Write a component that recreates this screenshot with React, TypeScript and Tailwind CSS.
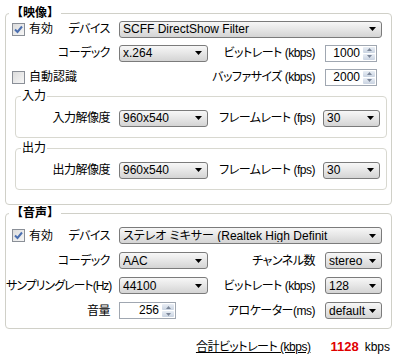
import type { ReactNode } from 'react'

const FONT = "font-['Liberation_Sans','Noto_Sans_CJK_JP',sans-serif] [font-feature-settings:'palt']"

function Check({ checked }: { checked?: boolean }) {
  return (
    <div className="w-[13px] h-[13px] border border-[#8a8f97] bg-gradient-to-br from-[#dcdcdc] to-[#f6f6f6] flex items-center justify-center">
      {checked && (
        <svg width="9" height="9" viewBox="0 0 9 9">
          <path d="M1 4.5 L3.5 7 L8 1.5" fill="none" stroke="#4b6fb0" strokeWidth="2" />
        </svg>
      )}
    </div>
  )
}

function Combo({ value, w }: { value: string; w: string }) {
  return (
    <div className={`${w} h-[17px] rounded-[3px] border border-[#7b7b7b] bg-gradient-to-b from-[#f7f7f7] via-[#e6e6e6] to-[#d4d4d4] flex items-center pl-[3px] pr-[5px]`}>
      <span className="flex-1 overflow-hidden whitespace-nowrap text-[12px] leading-none">{value}</span>
      <svg width="7" height="4" viewBox="0 0 7 4" className="shrink-0 ml-[2px]">
        <path d="M0 0 H7 L3.5 4 Z" fill="#000" />
      </svg>
    </div>
  )
}

function Spin({ value, w }: { value: string; w: string }) {
  return (
    <div className={`${w} h-[17px] border border-[#a0a7b1] bg-white flex items-stretch`}>
      <span className="flex-1 text-right text-[12px] leading-[15px] pr-[2px]">{value}</span>
      <div className="w-[14px] flex flex-col gap-px p-px">
        <div className="flex-1 rounded-[1px] bg-gradient-to-b from-[#e9eef5] to-[#c9d3e1] flex items-center justify-center">
          <svg width="5" height="3" viewBox="0 0 5 3"><path d="M0 3 H5 L2.5 0 Z" fill="#7a8598" /></svg>
        </div>
        <div className="flex-1 rounded-[1px] bg-gradient-to-b from-[#e9eef5] to-[#c9d3e1] flex items-center justify-center">
          <svg width="5" height="3" viewBox="0 0 5 3"><path d="M0 0 H5 L2.5 3 Z" fill="#7a8598" /></svg>
        </div>
      </div>
    </div>
  )
}

function Label({ children, w, lead, tight }: { children?: ReactNode; w: string; lead?: ReactNode; tight?: boolean }) {
  return (
    <div className={`${w} shrink-0 flex items-center justify-between pr-px`}>
      <div className="flex items-center">{lead}</div>
      <span className={`whitespace-nowrap ${tight ? 'tracking-[-1px]' : 'tracking-[-0.5px]'}`}>{children}</span>
    </div>
  )
}

function Enable({ text, checked }: { text: string; checked?: boolean }) {
  return (
    <div className="flex items-center gap-[4px] pl-[6px]">
      <Check checked={checked} />
      <span>{text}</span>
    </div>
  )
}

function Group({ title, children, className }: { title: string; children: ReactNode; className?: string }) {
  return (
    <fieldset className={`border border-[#d0d0c8] rounded-[4px] ${className ?? ''}`}>
      <legend className="ml-[3px] px-[2px] leading-[8px] font-bold text-[12px] [font-feature-settings:normal]">{title}</legend>
      {children}
    </fieldset>
  )
}

function SubGroup({ title, label, res, className }: { title: string; label: string; res: string; className?: string }) {
  return (
    <fieldset className={`ml-[9px] mr-[4px] border border-[#d8d8d0] rounded-[4px] pt-[6px] pb-[7px] ${className ?? ''}`}>
      <legend className="ml-[5px] px-px leading-[8px] text-[12px]">{title}</legend>
      <div className="flex items-center h-[24px]">
        <Label w="w-[95px]">{label}</Label>
        <div className="ml-[8px]"><Combo value={res} w="w-[89px]" /></div>
        <Label w="w-[108px]">フレームレート (fps)</Label>
        <div className="ml-[7px]"><Combo value="30" w="w-[57px]" /></div>
      </div>
    </fieldset>
  )
}

export default function App() {
  return (
    <div className={`w-[397px] h-[357px] bg-white text-black text-[12px] ${FONT}`}>
      <div className="pt-[9px] px-[5px]">
        <Group title="【映像】" className="pb-[14px]">
          <div className="flex items-center h-[24px]">
            <Label w="w-[105px]" lead={<Enable text="有効" checked />}>デバイス</Label>
            <div className="ml-[8px]"><Combo value="SCFF DirectShow Filter" w="w-[263px]" /></div>
          </div>
          <div className="flex items-center h-[24px]">
            <Label w="w-[105px]">コーデック</Label>
            <div className="ml-[8px]"><Combo value="x.264" w="w-[89px]" /></div>
            <Label w="w-[108px]">ビットレート (kbps)</Label>
            <div className="ml-[9px]"><Spin value="1000" w="w-[52px]" /></div>
          </div>
          <div className="flex items-center h-[24px]">
            <Label w="w-[105px]" lead={<Enable text="自動認識" />} />
            <div className="w-[97px]" />
            <Label w="w-[108px]">バッファサイズ (kbps)</Label>
            <div className="ml-[9px]"><Spin value="2000" w="w-[52px]" /></div>
          </div>
          <SubGroup title="入力" label="入力解像度" res="960x540" className="mt-[3px]" />
          <SubGroup title="出力" label="出力解像度" res="960x540" className="mt-[6px]" />
        </Group>

        <Group title="【音声】" className="mt-[4px] pt-[6px] pb-[5px]">
          <div className="flex items-center h-[25px]">
            <Label w="w-[105px]" lead={<Enable text="有効" checked />}>デバイス</Label>
            <div className="ml-[8px]"><Combo value="ステレオ ミキサー (Realtek High Definit" w="w-[263px]" /></div>
          </div>
          <div className="flex items-center h-[25px]">
            <Label w="w-[105px]">コーデック</Label>
            <div className="ml-[8px]"><Combo value="AAC" w="w-[89px]" /></div>
            <Label w="w-[108px]">チャンネル数</Label>
            <div className="ml-[9px]"><Combo value="stereo" w="w-[57px]" /></div>
          </div>
          <div className="flex items-center h-[25px]">
            <Label w="w-[105px]" tight>サンプリングレート(Hz)</Label>
            <div className="ml-[8px]"><Combo value="44100" w="w-[89px]" /></div>
            <Label w="w-[108px]">ビットレート (kbps)</Label>
            <div className="ml-[9px]"><Combo value="128" w="w-[57px]" /></div>
          </div>
          <div className="flex items-center h-[25px]">
            <Label w="w-[105px]">音量</Label>
            <div className="ml-[8px]"><Spin value="256" w="w-[57px]" /></div>
            <div className="w-[32px]" />
            <Label w="w-[108px]">アロケーター(ms)</Label>
            <div className="ml-[9px]"><Combo value="default" w="w-[57px]" /></div>
          </div>
        </Group>

        <div className="flex items-center justify-end h-[26px] mt-[5px] pr-[2px]">
          <span className="underline tracking-[-0.5px]">合計ビットレート (kbps)</span>
          <span className="ml-[20px] text-[#e00000] font-bold text-[13px]">1128</span>
          <span className="ml-[6px]">kbps</span>
        </div>
      </div>
    </div>
  )
}
